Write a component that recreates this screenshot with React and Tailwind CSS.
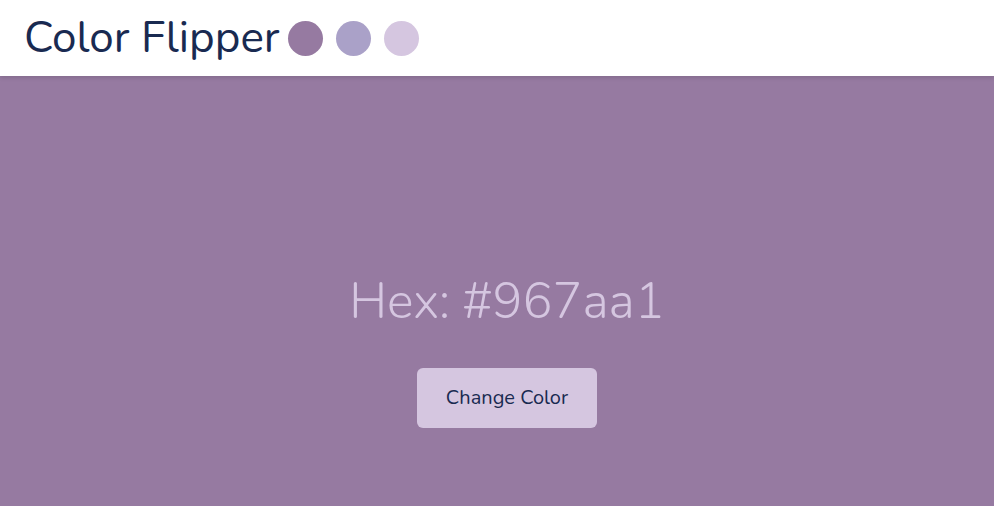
export default function App() {
  return (
    <div className="min-h-screen flex flex-col bg-[#967aa1]">
      <header className="relative z-10 h-[76px] bg-white flex items-center pl-[24px] gap-[8px] shadow-[0_2px_4px_rgba(0,0,0,0.12)]">
        <h1 className="text-[44px] leading-none text-[#192a51] font-['Nunito','Lato','Open_Sans',sans-serif]">Color Flipper</h1>
        <div className="flex items-center gap-[13px]">
          <span className="w-[35px] h-[35px] rounded-full bg-[#967aa1]"></span>
          <span className="w-[35px] h-[35px] rounded-full bg-[#aaa1c8]"></span>
          <span className="w-[35px] h-[35px] rounded-full bg-[#d5c6e0]"></span>
        </div>
      </header>
      <main className="flex-1 flex flex-col items-center pt-[196px] pl-[20px] font-['Nunito','Lato','Open_Sans',sans-serif]">
        <h2 className="text-[50px] leading-[60px] font-light text-[#d5c6e0]">Hex: #967aa1</h2>
        <button className="mt-[36px] w-[180px] h-[60px] rounded-[6px] bg-[#d5c6e0] text-[#192a51] text-[20px]">Change Color</button>
      </main>
    </div>
  );
}
